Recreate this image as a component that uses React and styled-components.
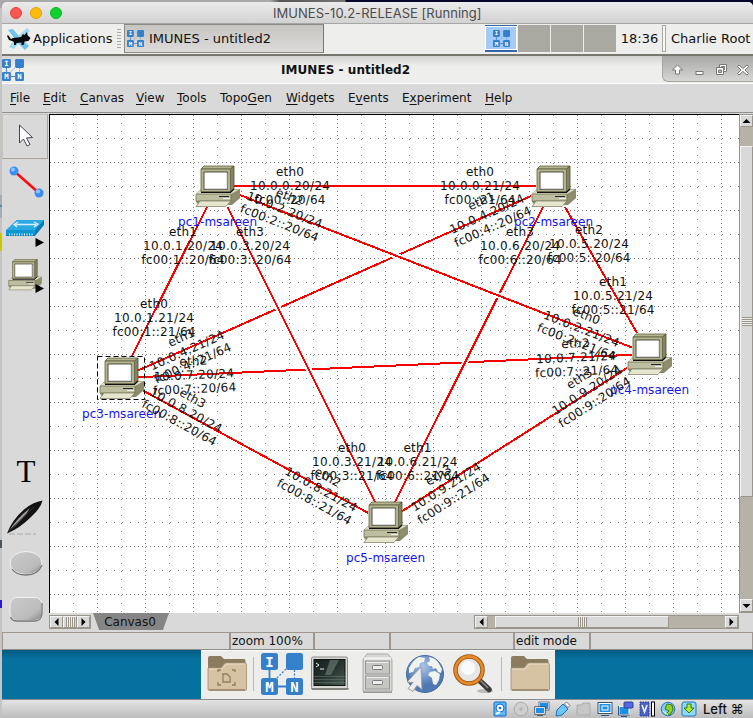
import React from "react";
import styled, { createGlobalStyle } from "styled-components";

const Global = createGlobalStyle`
  * { box-sizing: border-box; }
  body { margin: 0; overflow: hidden; background: #c9c9c9; font-family: "DejaVu Sans", sans-serif; font-size: 12px; color: #111; }
  svg { display: block; flex: none; }
`;

const Screen = styled.div`
  width: 753px; height: 718px; display: flex; padding-left: 2px; padding-top: 2px;
  background:
    linear-gradient(#5b87a4, #5b87a4) 0 205px / 2px 2px no-repeat,
    linear-gradient(#a4adb4, #a4adb4) 0 195px / 2px 23px no-repeat,
    linear-gradient(#c6c800, #c6c800) 0 233px / 2px 18px no-repeat,
    linear-gradient(#2a1bd0, #2a1bd0) 0 600px / 2px 8px no-repeat,
    linear-gradient(#4a5560, #4a5560) 0 540px / 2px 8px no-repeat,
    linear-gradient(90deg, #a9a9a9 270px, #555 280px, #777 345px, #07052a 346px) 0 0 / 753px 8px no-repeat,
    #c4c4c4;
`;
const Window = styled.div`
  flex: 1; display: flex; flex-direction: column; background: #d9d9d9;
  border-radius: 5px 5px 0 0; overflow: hidden;
`;
const MacTitle = styled.div`
  height: 22px; display: flex; align-items: center; padding-left: 8px; gap: 8px;
  background: linear-gradient(#ebebeb, #d2d2d2); border-bottom: 1px solid #a6a6a6;
`;
const Light = styled.i`
  width: 12px; height: 12px; border-radius: 50%; background: ${(p) => p.$c}; border: 1px solid ${(p) => p.$b};
`;
const MacTitleText = styled.span`
  margin-left: 203px; font: 13px Inter, sans-serif; color: #4c4c4c; white-space: nowrap; letter-spacing: ${(p) => p.$ls}px;
`;
const Panel = styled.div`
  height: 32px; display: flex; align-items: stretch; background: #eeeeec; font-size: 13px;
  border-bottom: 2px solid #77776f; padding-bottom: 1px;
`;
const AppsButton = styled.div`
  width: 122px; display: flex; align-items: center; padding-left: 5px; gap: 2px; white-space: nowrap;
`;
const Grip = styled.span`
  width: 4px; height: 20px; margin-left: 3px;
  background: repeating-linear-gradient(#aaa9a2 0 1px, transparent 1px 3px);
`;
const TaskButton = styled.div`
  width: 200px; display: flex; align-items: center; gap: 5px; padding-left: 2px; white-space: nowrap;
  background: linear-gradient(#c6c5c2, #dcdbd9); border: 1px solid #8c8b85; border-right-color: #777;
`;
const Pager = styled.div`
  margin-left: 161px; display: flex; gap: 1px; padding-top: 1px; padding-bottom: 1px;
`;
const Desk = styled.div`
  width: 32px; background: ${(p) => (p.$on ? "#a4cbf8" : "#a9a9a1")};
  ${(p) => p.$on && "box-shadow: inset 0 1px #3465a4, inset 0 -2px #3465a4, inset 0 2px #fff, inset 0 -3px #fff, inset 1px 0 #fff, inset -1px 0 #fff;"}
  display: flex; align-items: center; justify-content: center;
`;
const Clock = styled.div`
  width: 45px; display: flex; align-items: center; justify-content: center; margin-left: 1px; white-space: nowrap;
`;
const Separator = styled.div`
  width: 4px; margin: 1px 0 1px; border: 1px solid #a9a9a1; background: #f8f8f6;
`;
const User = styled.div`
  padding-left: 5px; display: flex; align-items: center; white-space: nowrap;
`;
const WinTitle = styled.div`
  height: 28px; display: flex; align-items: flex-start; border-bottom: 1px solid #fff; font-weight: bold;
  background: linear-gradient(#d3d3d1, #eeeeec 10px, #eeeeec);
`;
const WinLogo = styled.div`padding-top: 3px; width: 24px;`;
const WinName = styled.div`flex: 1; padding: 7px 0 0 255px; line-height: 14px; white-space: nowrap; letter-spacing: ${(p) => p.$ls}px;`;
const WinControls = styled.div`
  width: 91px; height: 26px; border: 1px solid #a6a6a2; border-width: 0 0 1px 1px; border-radius: 0 0 0 6px;
  background: linear-gradient(#a8a8a6, #d6d6d4);
`;
const Menu = styled.div`
  height: 29px; display: flex; align-items: center; padding-left: 8px; gap: 13px; border-bottom: 1px solid #8f8f8f;
  u { text-underline-offset: 2px; text-decoration-thickness: 1px; text-decoration-skip-ink: none; }
`;
const MenuItem = styled.span`width: ${(p) => p.$w}px; white-space: nowrap;`;
const Body = styled.div`height: 519px; display: flex; padding-top: 1px;`;
const Main = styled.div`flex: 1; display: flex; flex-direction: column;`;
const CanvasRow = styled.div`height: 499px; display: flex;`;
const Tools = styled.div`width: 47px; display: flex; flex-direction: column;`;
const ToolCell = styled.div`
  height: ${(p) => p.$h}px; flex: none;
  ${(p) => p.$on && "border: 1px solid #aaa39a; border-left-color: #c8c4bd; border-top-color: #c8c4bd; width: 46px;"}
`;
const ToolGap = styled.div`flex: 1;`;
const CanvasBox = styled.div`
  width: 690px; height: 499px; background: #fff; border-left: 1px solid #000; border-top: 1px solid #000; overflow: hidden;
`;
const VScroll = styled.div`
  width: 14px; height: 499px; display: flex; flex-direction: column; background: #b6b2a7; border: 1px solid #9a958a; border-right: 0;
`;
const Thumb = styled.div`
  background: #d9d9d9; border: 1px solid; border-color: #f2f2f0 #9a958a #9a958a #f2f2f0;
  display: flex; align-items: center; justify-content: center; flex: none;
  ${(p) => (p.$w ? `width: ${p.$w}px;` : "")} ${(p) => (p.$h ? `height: ${p.$h}px;` : "")}
`;
const Ridges = styled.span`
  width: ${(p) => (p.$v ? "10px" : "9px")}; height: ${(p) => (p.$v ? "9px" : "10px")};
  background: repeating-linear-gradient(${(p) => (p.$v ? "180deg" : "90deg")}, #9a958a 0 1px, #eee 1px 2px);
`;
const Spacer = styled.div`
  flex: ${(p) => (p.$s ? `0 0 ${p.$s}px` : "1")};
`;
const TabRow = styled.div`height: 19px; display: flex; align-items: flex-start;`;
const HScroll = styled.div`
  height: 14px; width: ${(p) => p.$w}px; margin-top: 2px; margin-left: ${(p) => p.$ml || 0}px; flex: none;
  display: flex; border: 1px solid #9a958a; background: #b6b2a7;
`;
const Tab = styled.div`
  width: 76px; height: 17px; margin-left: 2px; background: #858585; text-align: center; line-height: 18px; flex: none;
  clip-path: polygon(0 0, 100% 0, 92% 100%, 8% 100%); padding-right: 2px;
`;
const Status = styled.div`height: 18px; display: flex; background: #d9d9d9;`;
const StatusCell = styled.div`
  width: ${(p) => p.$w}px; height: 18px; line-height: 16px; padding-left: 1px; white-space: nowrap;
  border: 1px solid #9f978d; border-bottom-color: #8d8d88;
`;
const Dock = styled.div`
  height: 49px; display: flex; padding-left: 199px;
  background: linear-gradient(#045a80, #06719f 9px, #0670a0);
`;
const DockPanel = styled.div`
  width: 354px; background: #ededec; border-left: 1px solid #fff; border-top: 1px solid #fff;
`;
const VmBar = styled.div`
  height: 19px; display: flex; align-items: center; padding-left: 487px; background: linear-gradient(#e3e3e3, #bdbdbd);
  border-top: 1px solid #8b8b8b;
`;
const HostKey = styled.span`
  font: 500 13px Inter, "DejaVu Sans", sans-serif; margin-left: 3px; white-space: nowrap;
  display: flex; align-items: center; gap: 4px; color: #111;
`;

function Logo({ size }) {
  const t = { fontFamily: "DejaVu Sans Mono", fontWeight: "bold", fontSize: 14, fill: "#fff", textAnchor: "middle" };
  return (
    <svg width={size} height={size} viewBox="0 0 42 42">
      <path d="M8.5 17v8M17 33.5h8" stroke="#3580cb" strokeWidth="1.8" />
      <path d="M33.5 17v8M25 16l-9 9" stroke="#3580cb" strokeDasharray="2 1.6" strokeWidth="1.3" />
      {[[0, 0], [25, 0], [0, 25], [25, 25]].map(([x, y]) => (
        <rect key={`${x}${y}`} x={x} y={y} width="17" height="17" rx="2.5" fill="#3580cb" />
      ))}
      <text x="8.5" y="13.5" {...t}>I</text>
      <text x="8.5" y="38.5" {...t}>M</text>
      <text x="33.5" y="38.5" {...t}>N</text>
    </svg>
  );
}

function Xfce() {
  return (
    <svg width="24" height="22" viewBox="0 0 24 22">
      <path d="M1 2l5-1 5 6 8 8 3 3-4 4-7-7z" fill="#6fc3e6" />
      <path d="M20 0l3 3-9 9-7 9-5-2 5-7z" fill="#9bdcf2" />
      <path d="M1 7l3 4 2-1 8-1 2-3 1.500 1L20 4l.5 3 3 3-2 3-4 .5-1 3.500h-2v-2.500l-5 .5-.5 2H7v-3l-2-1-3-1-2-4z" fill="#080808" />
    </svg>
  );
}

const PcShape = ({ x = 0, y = 0, s = 1 }) => (
  <g transform={`translate(${x} ${y}) scale(${s})`}>
    <path d="M1 28l5-5h39v9l-8 7H4l-3-3z" fill="#8a8a6a" />
    <path d="M1 28l5-4.500h38.500l-8 4.500z" fill="#dedec6" />
    <path d="M1 28h35v7H1z" fill="#bdbda0" />
    <path d="M36 28l8.500-4.500v7L36 37z" fill="#8e8e6c" />
    <path d="M1 28h35v7H1z" fill="none" stroke="#77775b" strokeWidth=".8" />
    <path d="M24 30.500h10" stroke="#222" strokeWidth="1" />
    <path d="M28 32.500h7" stroke="#eee" strokeWidth="1" />
    <path d="M5 35h31l-5 5.500H1z" fill="#e6e6cf" stroke="#77775b" strokeWidth=".7" />
    <path d="M6 3l3-3h30l-3.500 3z" fill="#b5b590" stroke="#5f5f45" strokeWidth=".8" />
    <path d="M35.500 3L39 0v23l-3.500 3.500z" fill="#85855f" stroke="#4c4c35" strokeWidth=".8" />
    <path d="M6 3h29.500v23H6z" fill="#b4b48e" stroke="#5f5f45" strokeWidth=".8" />
    <path d="M6 26.300h29.500L39 23" fill="none" stroke="#111" strokeWidth="1.200" />
    <path d="M9 6h23.500v17.500H9z" fill="#fff" stroke="#3e3e2c" strokeWidth=".9" />
    <path d="M10 22.800h22V7" fill="none" stroke="#c5c5d5" strokeWidth=".9" />
  </g>
);

const nodes = [
  { name: "pc1-msareen", x: 217, y: 186 },
  { name: "pc2-msareen", x: 553, y: 186 },
  { name: "pc3-msareen", x: 121, y: 378, selected: true },
  { name: "pc4-msareen", x: 649, y: 354 },
  { name: "pc5-msareen", x: 385, y: 522 },
];

const links = [
  [234, 186, 536, 186],
  [207, 207, 131.500, 357],
  [240, 195, 632, 347.500],
  [227.500, 207, 375, 502],
  [531, 196, 138, 370.500],
  [565, 207, 637, 333],
  [543, 207, 395, 502],
  [138, 377.200, 632, 354.800],
  [143, 390.500, 368, 512.800],
  [627, 368, 402, 511.200],
];

const labels = [
  [290, 186, 0, "eth0", "10.0.0.20/24", "fc00::20/64"],
  [480, 186, 0, "eth0", "10.0.0.21/24", "fc00::21/64"],
  [183, 246, 0, "eth1", "10.0.1.20/24", "fc00:1::20/64"],
  [154, 318, 0, "eth0", "10.0.1.21/24", "fc00:1::21/64"],
  [284.500, 210, 21.250, "eth2", "10.0.2.20/24", "fc00:2::20/64"],
  [581.500, 329, 21.250, "eth0", "10.0.2.21/24", "fc00:2::21/64"],
  [250, 246, 0, "eth3", "10.0.3.20/24", "fc00:3::20/64"],
  [352, 462, 0, "eth0", "10.0.3.21/24", "fc00:3::21/64"],
  [487, 214, -23.960, "eth1", "10.0.4.20/24", "fc00:4::20/64"],
  [187, 350.500, -23.960, "eth1", "10.0.4.21/24", "fc00:4::21/64"],
  [589, 244, 0, "eth2", "10.0.5.20/24", "fc00:5::20/64"],
  [613, 296, 0, "eth1", "10.0.5.21/24", "fc00:5::21/64"],
  [520, 246, 0, "eth3", "10.0.6.20/24", "fc00:6::20/64"],
  [417.500, 462, 0, "eth1", "10.0.6.21/24", "fc00:6::21/64"],
  [194, 375, -2.600, "eth2", "10.0.7.20/24", "fc00:7::20/64"],
  [576, 357.500, -2.600, "eth2", "10.0.7.21/24", "fc00:7::21/64"],
  [186, 410.500, 28.600, "eth3", "10.0.8.20/24", "fc00:8::20/64"],
  [321, 489.500, 28.600, "eth2", "10.0.8.21/24", "fc00:8::21/64"],
  [587, 390.500, -32.500, "eth3", "10.0.9.20/24", "fc00:9::20/64"],
  [446, 487, -32.500, "eth3", "10.0.9.21/24", "fc00:9::21/64"],
];

const textWidth = (t) => (t.length === 4 ? 28 : t.length === 12 ? 80 : t.length === 13 ? 83 : 71);

const DiagramText = styled.text`
  font: 12px "DejaVu Sans", sans-serif; text-anchor: middle; fill: ${(p) => p.$fill || "#111"};
`;

const range = (n, step) => Array.from({ length: n }, (_, i) => i * step);

function Topology() {
  return (
    <svg width="689" height="498" viewBox="50 115 689 498">
      <defs>
        <pattern id="grid" x="49" y="114" width="48" height="48" patternUnits="userSpaceOnUse">
          {range(12, 4).map((d) => (
            <g key={d} fill="#7d7d7d">
              <rect x={d + 1} y="0" width="1" height="1" />
              <rect x="0" y={d + 1} width="1" height="1" />
            </g>
          ))}
          {range(6, 8).map((d) => (
            <g key={d} fill="#7d7d7d">
              <rect x={d + 1} y="24" width="1" height="1" />
              <rect x="24" y={d + 1} width="1" height="1" />
            </g>
          ))}
        </pattern>
      </defs>
      <rect x="50" y="115" width="689" height="498" fill="url(#grid)" />
      {[...links].reverse().map(([x1, y1, x2, y2]) => (
        <g key={`${x1}-${x2}`} shapeRendering="crispEdges">
          <line x1={x1} y1={y1} x2={x2} y2={y2} stroke="#fff" strokeWidth="6" />
          <line x1={x1} y1={y1} x2={x2} y2={y2} stroke="#f80000" strokeWidth="2" />
        </g>
      ))}
      {nodes.map((n) => (
        <g key={n.name}>
          <DiagramText $fill="#1414f0" x={n.x + 0.5} y={n.y + 40} textLength="79">{n.name}</DiagramText>
          <PcShape x={n.x - 22} y={n.y - 20} />
          {n.selected && (
            <rect x={n.x - 23.500} y={n.y - 21.500} width="47" height="43" fill="none" stroke="#000" strokeDasharray="5 3" />
          )}
        </g>
      ))}
      {labels.map(([x, y, a, ...lines]) => (
        <g key={lines[1]} transform={`translate(${x} ${y}) rotate(${a})`}>
          {lines.map((t, i) => (
            <DiagramText key={t} x="0" y={(i - 1) * 14 + 4} textLength={textWidth(t)}>{t}</DiagramText>
          ))}
        </g>
      ))}
    </svg>
  );
}

const Folder = ({ mark }) => (
  <svg width="40" height="38" viewBox="0 0 40 38">
    <path d="M1 3q0-2 2-2h11l3 3h20q1.500 0 1.500 2v10H1z" fill="#8b7b5f" />
    <path d="M1 13h13l4-5h20q1.500 0 1.500 2v24q0 1.500-1.500 1.500H2.500Q1 35.500 1 34z" fill="#d6c3a4" stroke="#a08d6c" strokeWidth=".8" />
    <path d="M2 14h13l4-5h19" fill="none" stroke="#eadfc9" />
    <path d="M2 34.800h36" stroke="#8d7a5a" />
    {mark && (
      <g fill="none" stroke="#927d5e" strokeWidth="1.300">
        <path d="M16 19h4l3 3v5h-7z" />
        <path d="M11 17v-2h3M25 15h3v2M11 27v3h3M25 30h3v-3" />
      </g>
    )}
  </svg>
);

const TerminalIcon = () => (
  <svg width="40" height="36" viewBox="0 0 40 36">
    <defs>
      <linearGradient id="term" x1="0" y1="0" x2="1" y2="1"><stop stopColor="#15201f" /><stop offset=".5" stopColor="#26332f" /><stop offset="1" stopColor="#4d5f59" /></linearGradient>
    </defs>
    <rect x="1.500" y="1" width="36" height="32" rx="1.500" fill="#d8d8d4" stroke="#888" />
    <path d="M1 32h38l-1 2H2z" fill="#85857f" />
    <rect x="4" y="3.500" width="31" height="26" fill="url(#term)" stroke="#111" />
    <path d="M20 4h9l-8 15h-6z" fill="#71807a" opacity=".6" />
    <path d="M6 7l3 2-3 2M10 13h4" fill="none" stroke="#eee" />
    <path d="M4 20.500h31M4 23.500h31M4 26.500h31" stroke="#6f8079" strokeWidth=".5" />
  </svg>
);

const Cabinet = () => (
  <svg width="31" height="42" viewBox="0 0 31 42">
    <path d="M1 8q0-2 1-3l3-4h21l3 4q1 1 1 3v30H1z" fill="#d9d9d6" stroke="#a9a9a6" />
    <path d="M2 5.500h27" stroke="#f4f4f4" strokeWidth="2" />
    <path d="M1 38.500h29v1.500H1z" fill="#999" />
    {[8, 23].map((y) => (
      <g key={y}>
        <rect x="3.500" y={y} width="24" height="13" fill="#c5c5c2" stroke="#999" />
        <path d={`M4.500 ${y + 1.500}h22`} stroke="#efefef" />
        <rect x="10.500" y={y + 4.500} width="10" height="4" rx="1" fill="#eee" stroke="#777" />
      </g>
    ))}
  </svg>
);

const GlobeIcon = () => (
  <svg width="40" height="40" viewBox="0 0 40 40">
    <defs><radialGradient id="globe" cx=".45" cy=".3"><stop stopColor="#a9c4e6" /><stop offset="1" stopColor="#4f79b3" /></radialGradient></defs>
    <circle cx="20" cy="20" r="18.500" fill="url(#globe)" stroke="#4a6c9c" />
    <path d="M4 14q4-8 10-11l6 1-1 4-4 1-1 4-4 1-2 4-4 1zM24 3q6 1 9 5l4 7-1 4-3-1-2-4-3 1-1-3-3 0-2-3 3-2zM25 18l5-1 5 3-1 6-3 5-3-1-1-6-4-3z" fill="#f1f3ef" />
    <path d="M16 13L2 28l6 .5-5 6 5 3 4-6 5 4z" fill="#ececec" stroke="#999" strokeWidth=".9" />
  </svg>
);

const Magnifier = () => (
  <svg width="42" height="42" viewBox="0 0 42 42">
    <ellipse cx="32" cy="38" rx="8" ry="2" fill="#bbb" />
    <path d="M26 27l10 9.500" stroke="#3a3a3a" strokeWidth="5.500" strokeLinecap="round" />
    <path d="M26 26l9 9" stroke="#8a8a8a" strokeWidth="1.600" />
    <circle cx="16" cy="17" r="13.500" fill="#e6e6e6" stroke="#9a5008" strokeWidth="4.500" />
    <circle cx="16" cy="17" r="13.500" fill="none" stroke="#e58a2b" strokeWidth="2.800" />
    <circle cx="15" cy="15" r="7" fill="#fafafa" />
  </svg>
);

const DockItems = styled.div`
  display: flex; height: 46px; align-items: center; padding-left: 4px;
`;
const DockSlot = styled.div`width: ${(p) => p.$w}px; display: flex; justify-content: center; flex: none;`;
const DockLine = styled.div`width: 1px; height: 34px; background: #b7b7b4; flex: none;`;
const VmSlot = styled.div`width: 21.100px; display: flex; justify-content: center; flex: none;`;

const blue = "#1e8fe6";
const vmIcons = [
  <g><rect x="2" y="1" width="12" height="14" rx="1" fill="#58baf6" stroke="#1468c8" /><circle cx="8" cy="7" r="4" fill="#fff" stroke="#1468c8" /><circle cx="8" cy="7" r="1.300" fill="#1468c8" /><path d="M4 13l4-2" stroke="#fff" strokeWidth="2" /></g>,
  <g fill="#cfcfcf" stroke="#aaa"><circle cx="8" cy="8" r="6.800" /><circle cx="8" cy="8" r="1.200" /></g>,
  <g><rect x="5.500" y="1.500" width="9" height="7" fill={blue} stroke="#fff" /><rect x="5" y="1" width="10" height="8" fill="none" stroke="#345" strokeWidth=".7" /><rect x="1.500" y="6.500" width="9" height="6" fill={blue} stroke="#fff" /><path d="M.7 5.700h10.600v7.600H.7zM3 14.500h6" fill="none" stroke="#345" strokeWidth=".8" /></g>,
  <g><path d="M1 15l1-6 6-6 5 5-6 6z" fill="#6fc6fb" stroke="#1f6fb8" /><path d="M9.500 3l2-2L15 4.500l-2 2z" fill="#fff" stroke="#555" strokeWidth=".8" /></g>,
  <path d="M1 4h5l1-2h7v12H1z" fill="#c6c6c6" stroke="#aaa" />,
  <g><rect x="1" y="1.500" width="14" height="11" fill="#fff" stroke="#357" /><rect x="2.500" y="3" width="11" height="8" fill={blue} /><rect x="5" y="5" width="6" height="4" fill={blue} stroke="#fff" /><path d="M4 14.500h8" stroke="#357" /></g>,
  <g><rect x="1" y="5.500" width="10" height="8" fill={blue} stroke="#fff" /><path d="M.5 5v9h11M3 15.500h6" fill="none" stroke="#357" /><rect x="6" y="1" width="9" height="6" rx="1" fill="#5568df" stroke="#2a3b9c" /></g>,
  <g><rect x="1" y="1" width="9" height="14" fill="#4a62c9" stroke="#273a8c" strokeDasharray="1.500 1" /><path d="M3 4l2.500 7L8 4" fill="none" stroke="#fff" strokeWidth="1.500" /><rect x="12.500" y="1" width="3" height="14" fill="#fff" stroke="#000" /></g>,
  <g><circle cx="8" cy="8" r="6.800" fill="#7cc9f5" stroke="#2a74b2" /><path d="M7 3l5 1 1 5-3 5-4-1 3-3-4-2z" fill="#8fd12b" stroke="#3c7d12" /><path d="M3 10l5 4" stroke="#fff" /></g>,
  <g><rect x="1" y="1" width="14" height="14" rx="2" fill="#8fd8fb" stroke="#2277bb" /><path d="M6 3h4v4h3l-5 5-5-5h3z" fill="#b4e835" stroke="#2d7e1b" /></g>,
];

const Arrow = ({ d }) => (
  <svg width="11" height="12" viewBox="0 0 11 12"><path d={{ l: "M7.500 2v8L3.500 6z", r: "M3.500 2v8L7.500 6z", u: "M1.500 8h8L5.500 4z", d: "M1.500 4h8L5.500 8z" }[d]} fill="#000" /></svg>
);

const menu = [["", "F", "ile", 20], ["", "E", "dit", 24], ["", "C", "anvas", 43], ["", "V", "iew", 28], ["", "T", "ools", 30], ["Topo", "G", "en", 53], ["", "W", "idgets", 49], ["E", "v", "ents", 41], ["E", "x", "periment", 70], ["", "H", "elp", 27]];

export default function App() {
  return (
    <Screen>
      <Global />
      <Window>
        <MacTitle>
          <Light $c="#fc5650" $b="#e2443f" />
          <Light $c="#fdbc08" $b="#e0a000" />
          <Light $c="#0bd32c" $b="#08b522" />
          <MacTitleText $ls={0.04}>IMUNES-10.2-RELEASE [Running]</MacTitleText>
        </MacTitle>
        <Panel>
          <AppsButton><Xfce /><span>Applications</span><Grip /></AppsButton>
          <TaskButton><Logo size={17} /><span>IMUNES - untitled2</span></TaskButton>
          <Pager>
            <Desk $on><Logo size={17} /></Desk><Desk /><Desk /><Desk />
          </Pager>
          <Clock>18:36</Clock>
          <Separator />
          <User>Charlie Root</User>
        </Panel>
        <WinTitle>
          <WinLogo><Logo size={22} /></WinLogo>
          <WinName $ls={0.05}>IMUNES - untitled2</WinName>
          <WinControls>
            <svg width="90" height="25" viewBox="0 0 90 25" fill="#fff" stroke="#777775">
              <path d="M14.500 9l5 5h-3v4h-4v-4h-3z" />
              <rect x="33" y="15.500" width="7" height="3" />
              <path d="M56.500 8.500h7v7h-7z" />
              <path d="M58.500 10.500h3v3h-3z" fill="#bbb" />
              <path d="M53.500 11.500h7v7h-7z" />
              <path d="M55.500 14h3v2.500h-3z" fill="#bbb" />
              <path d="M76 9l4 3.500L84 9l1.500 1.500L82 14l3.500 3.500L84 19l-4-3.500L76 19l-1.500-1.500L78 14l-3.500-3.500z" />
            </svg>
          </WinControls>
        </WinTitle>
        <Menu>
          {menu.map(([a, b, c, w]) => <MenuItem key={a + b + c} $w={w}>{a}<u>{b}</u>{c}</MenuItem>)}
        </Menu>
        <Body>
          <Tools>
            <ToolCell $h={45} $on>
              <svg width="44" height="43" viewBox="3 115 44 43">
                <path d="M19.500 125v18l4-4 3.500 7 3-1.500-3.500-6.500 6-.5z" fill="#fff" stroke="#444455" />
              </svg>
            </ToolCell>
            <ToolCell $h={47}>
              <svg width="47" height="47" viewBox="2 159 47 47">
                <path d="M14 171l25 22" stroke="#fa0a0a" strokeWidth="2.500" />
                {[[14, 171], [39, 193]].map(([x, y]) => (
                  <g key={x}><circle cx={x} cy={y} r="4.500" fill="#3b8df0" /><circle cx={x - 1} cy={y - 1.500} r="2" fill="#8dc5ff" /></g>
                ))}
              </svg>
            </ToolCell>
            <ToolCell $h={46}>
              <svg width="47" height="46" viewBox="2 206 47 46">
                <path d="M6 231l11-11h27v5l-9 11H6z" fill="#067db8" />
                <path d="M6 230l11-10h27l-9 10z" fill="#2ba9e3" />
                <path d="M6 230h29v5H6z" fill="#0d95d6" />
                <path d="M15 224.500h21M18 222l-4 2.500 3 2.500M34 222l4 2-4 3" fill="none" stroke="#d8f0ff" strokeWidth="1.300" />
                <path d="M9 234.500h25" stroke="#e5f4fb" strokeWidth="2" strokeDasharray="1 1.500" />
                <path d="M35.500 238v9l8.500-4.500z" fill="#000" />
              </svg>
            </ToolCell>
            <ToolCell $h={46}>
              <svg width="47" height="46" viewBox="2 252 47 46">
                <PcShape x={8} y={259.500} s={0.750} />
                <path d="M35.500 284v9l8.500-4.500z" fill="#000" />
              </svg>
            </ToolCell>
            <ToolGap />
            <ToolCell $h={185}>
              <svg width="47" height="185" viewBox="2 447 47 185">
                <defs><linearGradient id="btn" x2="1" y2="1"><stop stopColor="#cacaca" /><stop offset=".7" stopColor="#bcbcbc" /><stop offset="1" stopColor="#858585" /></linearGradient></defs>
                <text x="26" y="482" fontFamily="Liberation Serif" fontSize="31" textAnchor="middle">T</text>
                <path d="M9 534h27" stroke="#aaa" strokeDasharray="6 2" />
                <path d="M7 533.500Q12 520 24 509.500 33 502 42.500 500.500 41 508 31 517 20 528 7 533.500z" fill="#121212" />
                <path d="M9 531Q16 519 30 508 24 519 9 531z" fill="#a09aa0" />
                <path d="M9 531L34 507" stroke="#333" />
                <ellipse cx="26" cy="563" rx="16" ry="11.500" fill="url(#btn)" stroke="#f2f2f2" />
                <path d="M42 565q-4 10-16 10-10 0-14-6" fill="none" stroke="#777" strokeWidth="1.300" />
                <rect x="10" y="597.500" width="32" height="23" rx="7" fill="url(#btn)" stroke="#f2f2f2" />
                <path d="M42 603v11q-1 7-7 7H17q-5 0-6.500-4" fill="none" stroke="#777" strokeWidth="1.300" />
              </svg>
            </ToolCell>
          </Tools>
          <Main>
            <CanvasRow>
              <CanvasBox><Topology /></CanvasBox>
              <VScroll>
                <Thumb $h={12}><Arrow d="u" /></Thumb>
                <Spacer $s={19} />
                <Thumb $h={351}><Ridges $v /></Thumb>
                <Spacer />
                <Thumb $h={13}><Arrow d="d" /></Thumb>
              </VScroll>
            </CanvasRow>
            <TabRow>
              <HScroll $w={42}>
                <Thumb $w={13}><Arrow d="l" /></Thumb>
                <Thumb $w={14}><Ridges /></Thumb>
                <Thumb $w={13}><Arrow d="r" /></Thumb>
              </HScroll>
              <Tab>Canvas0</Tab>
              <HScroll $w={265} $ml={305}>
                <Thumb $w={13}><Arrow d="l" /></Thumb>
                <Spacer $s={7} />
                <Thumb $w={174}><Ridges /></Thumb>
                <Spacer />
                <Thumb $w={13}><Arrow d="r" /></Thumb>
              </HScroll>
            </TabRow>
          </Main>
        </Body>
        <Status>
          <StatusCell $w={228} />
          <StatusCell $w={84}>zoom 100%</StatusCell>
          <StatusCell $w={76} />
          <StatusCell $w={124} />
          <StatusCell $w={76}>edit mode</StatusCell>
          <StatusCell $w={163} />
        </Status>
        <Dock>
          <DockPanel>
            <DockItems>
              <DockSlot $w={41}><Folder mark /></DockSlot>
              <DockSlot $w={6} /><DockLine /><DockSlot $w={6} />
              <DockSlot $w={44}><Logo size={42} /></DockSlot>
              <DockSlot $w={52}><TerminalIcon /></DockSlot>
              <DockSlot $w={42}><Cabinet /></DockSlot>
              <DockSlot $w={53}><GlobeIcon /></DockSlot>
              <DockSlot $w={46}><Magnifier /></DockSlot>
              <DockSlot $w={4} /><DockLine /><DockSlot $w={8} />
              <DockSlot $w={40}><Folder /></DockSlot>
            </DockItems>
          </DockPanel>
        </Dock>
        <VmBar>
          {vmIcons.map((icon, i) => (
            <VmSlot key={i}><svg width="16" height="16" viewBox="0 0 16 16">{icon}</svg></VmSlot>
          ))}
          <HostKey>Left <span>⌘</span></HostKey>
        </VmBar>
      </Window>
    </Screen>
  );
}
